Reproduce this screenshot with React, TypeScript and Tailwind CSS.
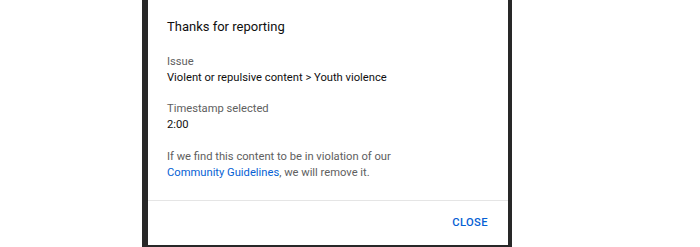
export default function App() {
  return (
    <div className="w-[700px] h-[247px] bg-white overflow-hidden font-['Roboto',sans-serif]">
      {/* dimmed page behind the dialog */}
      <div className="ml-[142px] w-[370px] h-[247px] bg-[#282828] pl-[6px] pr-[4px] pb-[2px] flex">
        <div className="flex-1 bg-white flex flex-col">
          <div className="pl-[19px] pr-5 pt-[17px]">
            <h2 className="text-[13px] leading-5 text-[#0f0f0f]">Thanks for reporting</h2>
            <div className="mt-[17px] text-[11.2px] leading-4">
              <div className="text-[#606060]">Issue</div>
              <div className="text-[#0f0f0f]">Violent or repulsive content &gt; Youth violence</div>
            </div>
            <div className="mt-[15px] text-[11.2px] leading-4">
              <div className="text-[#606060]">Timestamp selected</div>
              <div className="text-[#0f0f0f]">2:00</div>
            </div>
            <p className="mt-4 text-[11.2px] leading-4 text-[#606060]">
              If we find this content to be in violation of our
              <br />
              <span className="text-[#065fd4]">Community Guidelines</span>, we will remove it.
            </p>
          </div>
          <div className="mt-auto border-t border-[#e5e5e5] h-[45px] flex items-center justify-end pr-5">
            <button className="text-[11.2px] font-medium tracking-[0.4px] text-[#065fd4] uppercase">
              Close
            </button>
          </div>
        </div>
      </div>
    </div>
  );
}
